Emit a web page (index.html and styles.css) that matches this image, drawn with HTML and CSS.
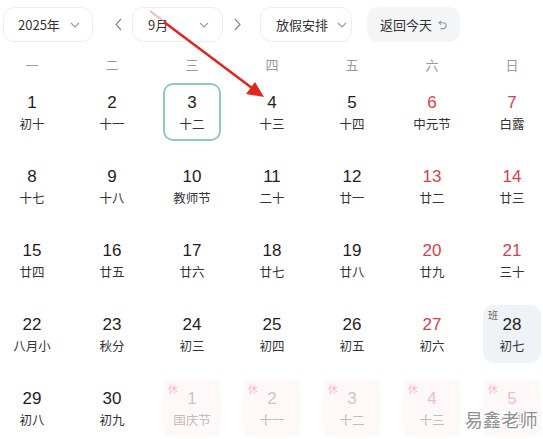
FILE: index.html
```html
<!DOCTYPE html>
<html lang="zh">
<head>
<meta charset="utf-8">
<link rel="stylesheet" href="styles.css">
</head>
<body>
<div class="page">
  <div class="toolbar">
    <div class="pill pill-year"><span>2025年</span><svg class="chev" viewBox="0 0 10 6"><path d="M1 1 L5 5 L9 1"/></svg></div>
    <svg class="nav nav-prev" viewBox="0 0 7 13"><path d="M6 1 L1 6.5 L6 12"/></svg>
    <div class="pill pill-month"><span>9月</span><svg class="chev" viewBox="0 0 10 6"><path d="M1 1 L5 5 L9 1"/></svg></div>
    <svg class="nav nav-next" viewBox="0 0 7 13"><path d="M1 1 L6 6.5 L1 12"/></svg>
    <div class="pill pill-hol"><span>放假安排</span><svg class="chev" viewBox="0 0 10 6"><path d="M1 1 L5 5 L9 1"/></svg></div>
    <div class="btn-today"><span>返回今天</span><svg class="ret" viewBox="0 0 9 10"><path d="M3 1 L1 2.8 L3 4.6 M1 2.8 H5.2 A2.9 2.9 0 0 1 5.2 8.6 H2.5"/></svg></div>
  </div>

  <div class="grid">
    <div class="wk">一</div><div class="wk">二</div><div class="wk">三</div><div class="wk">四</div><div class="wk">五</div><div class="wk">六</div><div class="wk">日</div>

    <div class="day"><div class="cell"><span class="n">1</span><span class="l">初十</span></div></div>
    <div class="day"><div class="cell"><span class="n">2</span><span class="l">十一</span></div></div>
    <div class="day"><div class="cell today"><span class="n">3</span><span class="l">十二</span></div></div>
    <div class="day"><div class="cell"><span class="n">4</span><span class="l">十三</span></div></div>
    <div class="day"><div class="cell"><span class="n">5</span><span class="l">十四</span></div></div>
    <div class="day"><div class="cell wkend"><span class="n">6</span><span class="l">中元节</span></div></div>
    <div class="day"><div class="cell wkend"><span class="n">7</span><span class="l">白露</span></div></div>

    <div class="day"><div class="cell"><span class="n">8</span><span class="l">十七</span></div></div>
    <div class="day"><div class="cell"><span class="n">9</span><span class="l">十八</span></div></div>
    <div class="day"><div class="cell"><span class="n">10</span><span class="l">教师节</span></div></div>
    <div class="day"><div class="cell"><span class="n">11</span><span class="l">二十</span></div></div>
    <div class="day"><div class="cell"><span class="n">12</span><span class="l">廿一</span></div></div>
    <div class="day"><div class="cell wkend"><span class="n">13</span><span class="l">廿二</span></div></div>
    <div class="day"><div class="cell wkend"><span class="n">14</span><span class="l">廿三</span></div></div>

    <div class="day"><div class="cell"><span class="n">15</span><span class="l">廿四</span></div></div>
    <div class="day"><div class="cell"><span class="n">16</span><span class="l">廿五</span></div></div>
    <div class="day"><div class="cell"><span class="n">17</span><span class="l">廿六</span></div></div>
    <div class="day"><div class="cell"><span class="n">18</span><span class="l">廿七</span></div></div>
    <div class="day"><div class="cell"><span class="n">19</span><span class="l">廿八</span></div></div>
    <div class="day"><div class="cell wkend"><span class="n">20</span><span class="l">廿九</span></div></div>
    <div class="day"><div class="cell wkend"><span class="n">21</span><span class="l">三十</span></div></div>

    <div class="day"><div class="cell"><span class="n">22</span><span class="l">八月小</span></div></div>
    <div class="day"><div class="cell"><span class="n">23</span><span class="l">秋分</span></div></div>
    <div class="day"><div class="cell"><span class="n">24</span><span class="l">初三</span></div></div>
    <div class="day"><div class="cell"><span class="n">25</span><span class="l">初四</span></div></div>
    <div class="day"><div class="cell"><span class="n">26</span><span class="l">初五</span></div></div>
    <div class="day"><div class="cell wkend"><span class="n">27</span><span class="l">初六</span></div></div>
    <div class="day"><div class="cell work"><span class="tag">班</span><span class="n">28</span><span class="l">初七</span></div></div>

    <div class="day"><div class="cell"><span class="n">29</span><span class="l">初八</span></div></div>
    <div class="day"><div class="cell"><span class="n">30</span><span class="l">初九</span></div></div>
    <div class="day"><div class="cell other rest"><span class="tag">休</span><span class="n">1</span><span class="l">国庆节</span></div></div>
    <div class="day"><div class="cell other rest"><span class="tag">休</span><span class="n">2</span><span class="l">十一</span></div></div>
    <div class="day"><div class="cell other rest"><span class="tag">休</span><span class="n">3</span><span class="l">十二</span></div></div>
    <div class="day"><div class="cell other rest wkend"><span class="tag">休</span><span class="n">4</span><span class="l">十三</span></div></div>
    <div class="day"><div class="cell other rest wkend"><span class="tag">休</span><span class="n">5</span><span class="l">十四</span></div></div>
  </div>

  <svg class="arrow" viewBox="0 0 543 439">
    <line class="faint" x1="150" y1="11" x2="166" y2="23" />
    <line x1="164" y1="22" x2="252" y2="88" />
    <polygon points="264,97 246,94 255,82" />
  </svg>
  <div class="watermark">易鑫老师</div>
</div>
</body>
</html>
```

FILE: styles.css
```css
* { box-sizing: border-box; }
html, body { margin: 0; padding: 0; background: #fff; }
body {
  font-family: "Noto Sans CJK SC", "Liberation Sans", sans-serif;
  color: #222;
  overflow: hidden;
}
.page {
  position: relative;
  width: 543px;
  height: 439px;
  overflow: hidden;
}
.toolbar {
  display: flex;
  align-items: center;
  padding: 7px 0 0 3px;
  height: 42px;
}
.pill {
  height: 35px;
  border: 1px solid #eeeeee;
  border-radius: 11px;
  display: flex;
  align-items: center;
  justify-content: space-between;
  white-space: nowrap;
  font-size: 13px;
  color: #333;
  background: #fff;
  flex: none;
}
.pill-year { width: 90px; padding: 0 12px 0 14px; }
.pill-month { width: 91px; padding: 0 13px 0 15px; margin-left: 10px; }
.pill-hol { width: 92px; padding: 0 4px 0 15px; margin-left: 19px; }
.chev {
  width: 10px;
  height: 6px;
  fill: none;
  stroke: #999;
  stroke-width: 1.1;
  flex: none;
}
.nav {
  width: 7px;
  height: 13px;
  fill: none;
  stroke: #888;
  stroke-width: 1.2;
  flex: none;
}
.nav-prev { margin-left: 22px; }
.nav-next { margin-left: 11px; }
.btn-today {
  margin-left: 15px;
  width: 93px;
  height: 35px;
  border-radius: 11px;
  background: #f4f5f7;
  display: flex;
  align-items: center;
  padding-left: 13px;
  white-space: nowrap;
  font-size: 13px;
  color: #333;
  flex: none;
}
.ret {
  width: 9px;
  height: 10px;
  margin-left: 6px;
  fill: none;
  stroke: #999;
  stroke-width: 1.1;
}
.grid {
  display: grid;
  grid-template-columns: repeat(7, 80px);
  grid-template-rows: 41px;
  grid-auto-rows: 74px;
  width: 560px;
  margin-left: -8px;
}
.wk {
  height: 41px;
  padding-top: 13px;
  line-height: 20px;
  text-align: center;
  font-size: 13px;
  color: #999;
}
.day {
  display: flex;
  justify-content: center;
}
.cell {
  position: relative;
  width: 58px;
  height: 58px;
  border: 2px solid transparent;
  border-radius: 10px;
  display: flex;
  flex-direction: column;
  align-items: center;
  padding-top: 8px;
}
.n {
  font-family: "Liberation Sans", "Noto Sans CJK SC", sans-serif;
  font-size: 17px;
  line-height: 20px;
  color: #1e1e1e;
}
.l {
  margin-top: 2px;
  font-size: 12.5px;
  line-height: 18px;
  color: #333;
  white-space: nowrap;
}
.wkend .n { color: #d9404a; }
.today { border-color: #8ccdb3; }
.work { background: #eff2f6; }
.tag {
  position: absolute;
  left: 3px;
  top: 2px;
  font-size: 10px;
  line-height: 12px;
  color: #666;
}
.rest { background: #fff8f9; }
.rest .tag { color: #f6c2ca; }
.other .n { color: #c8c8c8; }
.other .l { color: #bdbdbd; }
.other.wkend .n { color: #f2bcc5; }
.arrow {
  position: absolute;
  left: 0;
  top: 0;
  width: 543px;
  height: 439px;
  pointer-events: none;
}
.arrow line {
  stroke: #e0281e;
  stroke-width: 2.6;
}
.arrow line.faint {
  stroke: #e58a84;
  stroke-width: 1.6;
  opacity: 0.6;
}
.arrow polygon { fill: #e0281e; }
.watermark {
  position: absolute;
  right: 5px;
  bottom: 10px;
  font-size: 18px;
  line-height: 20px;
  color: #8f8f8f;
  letter-spacing: 0.3px;
  text-shadow: 0 0 2px #fff, 0 0 2px #fff, 1px 1px 0 #fff, -1px -1px 0 #fff;
}
```
